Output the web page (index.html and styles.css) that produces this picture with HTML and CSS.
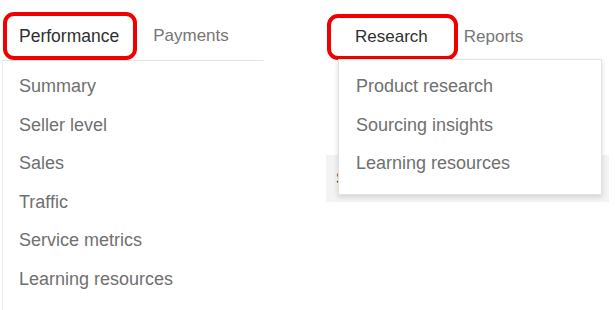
FILE: index.html
```html
<!DOCTYPE html>
<html>
<head>
<meta name="viewport" content="width=device-width, initial-scale=1">
<title>Seller Hub menus</title>
<link rel="stylesheet" href="styles.css">
</head>
<body>

<div class="page">

  <!-- Performance tab open -->
  <div class="panel panel-left">
    <div class="tabs">
      <span class="tab active">Performance</span>
      <span class="tab">Payments</span>
    </div>
    <ul class="menu">
      <li>Summary</li>
      <li>Seller level</li>
      <li>Sales</li>
      <li>Traffic</li>
      <li>Service metrics</li>
      <li>Learning resources</li>
    </ul>
  </div>

  <!-- Research tab open -->
  <div class="panel panel-right">
    <div class="tabs">
      <span class="tab active">Research</span>
      <span class="tab">Reports</span>
    </div>
    <div class="strip">Sales</div>
    <ul class="dropdown">
      <li>Product research</li>
      <li>Sourcing insights</li>
      <li>Learning resources</li>
    </ul>
  </div>

</div>

</body>
</html>
```

FILE: styles.css
```css
body {
  margin: 0;
  background: #fff;
  font-family: "Liberation Sans", Arial, sans-serif;
}

.page {
  display: flex;
  width: 615px;
  height: 310px;
  overflow: hidden;
}

/* Tab row */
.tabs {
  display: flex;
  align-items: center;
  height: 60px;
  box-sizing: border-box;
  padding-top: 12px;
}

.tab {
  display: flex;
  align-items: center;
  height: 48px;
  box-sizing: border-box;
  font-size: 17px;
  color: #767676;
}

.tab.active {
  color: #2f2f2f;
  border: 4px solid #f00000;
  border-radius: 11px;
}

/* Left panel */
.panel-left {
  width: 263px;
}

.panel-left .tab.active {
  margin-left: 3px;
  padding: 0 14px 0 12px;
  font-size: 17.5px;
}

.panel-left .tab.active + .tab {
  margin-left: 16px;
}

.menu {
  list-style: none;
  margin: 0 0 0 2px;
  padding: 6px 0 40px 0;
  border-top: 1px solid #e3e3e3;
  border-left: 1px solid #ececec;
}

.menu li,
.dropdown li {
  height: 38.5px;
  line-height: 38.5px;
  font-size: 18px;
  color: #707070;
}

.menu li {
  padding-left: 16px;
}

/* Right panel */
.panel-right {
  position: relative;
  width: 283px;
  margin-left: 63px;
}

.panel-right .tabs {
  padding-top: 13px;
}

.panel-right .tab {
  height: 46px;
}

.panel-right .tab.active {
  margin-left: 1px;
  padding: 0 26px 0 24px;
}

.panel-right .tab.active + .tab {
  margin-left: 6px;
}

/* page content peeking out under the menu */
.strip {
  margin-top: 95px;
  height: 47px;
  line-height: 47px;
  padding-left: 10px;
  background: #f3f3f3;
  font-size: 16px;
  color: #333;
}

.dropdown {
  position: absolute;
  top: 59px;
  left: 12px;
  width: 264px;
  height: 136px;
  box-sizing: border-box;
  list-style: none;
  margin: 0;
  padding: 7px 0 0 17px;
  background: #fff;
  border: 1px solid #e2e2e2;
  box-shadow: 0 2px 5px rgba(0, 0, 0, 0.14);
}
```
